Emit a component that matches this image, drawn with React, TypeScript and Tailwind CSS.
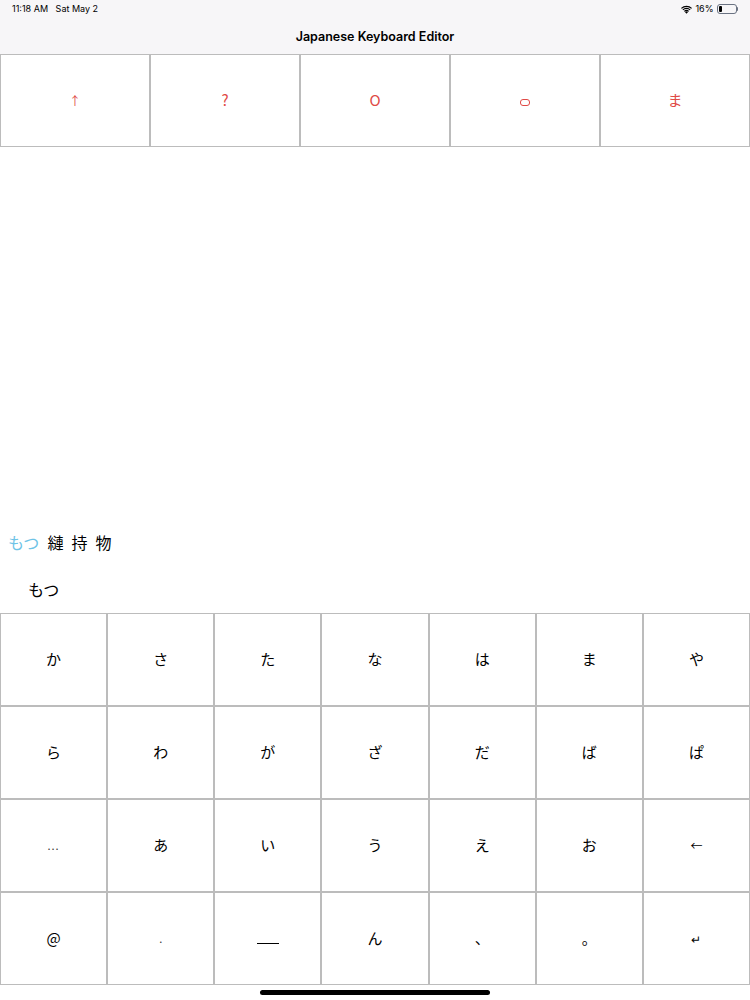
const topKeys = ['↑', '?', 'O', '○', 'ま'];

const keyRows = [
  ['か', 'さ', 'た', 'な', 'は', 'ま', 'や'],
  ['ら', 'わ', 'が', 'ざ', 'だ', 'ば', 'ぱ'],
  ['...', 'あ', 'い', 'う', 'え', 'お', '←'],
  ['@', '.', '__', 'ん', '、', '。', '↵'],
];

const jp = { fontFamily: '"Noto Sans CJK JP", "Noto Sans", sans-serif' };

function Wifi() {
  return (
    <svg className="w-[11px] h-[9px]" viewBox="0 0 12 9" fill="black">
      <path d="M6 9 L4.3 7.2 A2.4 2.4 0 0 1 7.7 7.2 Z" />
      <path d="M3.2 6.1 A4 4 0 0 1 8.8 6.1 L7.9 7 A2.7 2.7 0 0 0 4.1 7 Z" />
      <path d="M1.6 4.5 A6.3 6.3 0 0 1 10.4 4.5 L9.5 5.4 A5 5 0 0 0 2.5 5.4 Z" />
      <path d="M0 2.9 A8.6 8.6 0 0 1 12 2.9 L11.1 3.8 A7.3 7.3 0 0 0 0.9 3.8 Z" />
    </svg>
  );
}

function Battery() {
  return (
    <div className="flex items-center">
      <div className="w-[20px] h-[10px] rounded-[3px] border border-gray-500 p-[1px] flex">
        <div className="w-[3px] h-full bg-black rounded-[1px]" />
      </div>
      <div className="w-[1.5px] h-[4px] bg-gray-500 rounded-r-sm" />
    </div>
  );
}

export default function App() {
  return (
    <div
      className="w-[750px] h-[1000px] bg-white flex flex-col overflow-hidden"
      style={{ fontFamily: 'Inter, "Noto Sans", sans-serif' }}
    >
      <div className="bg-[#f7f6f8] h-[54px] flex flex-col">
        <div className="h-[18px] flex items-center justify-between px-[12px] text-[9px] text-black">
          <span>11:18 AM&nbsp;&nbsp;&nbsp;Sat May 2</span>
          <div className="flex items-center gap-[3px]">
            <Wifi />
            <span>16%</span>
            <Battery />
          </div>
        </div>
        <div className="flex-1 flex items-center justify-center text-[12.5px] font-semibold text-black pt-[3px]">
          Japanese Keyboard Editor
        </div>
      </div>

      <div className="grid grid-cols-5 h-[93px]" style={jp}>
        {topKeys.map((k, i) => (
          <div
            key={i}
            className="border border-[#bcbcbc] flex items-center justify-center text-[#e04a46] text-[15px]"
          >
            {k === '○' ? (
              <div className="w-[10px] h-[7px] border-[1.5px] border-[#e04a46] rounded-[3px] mt-[4px]" />
            ) : k === '↑' ? (
              <span className="text-[12px]">↑</span>
            ) : (
              k
            )}
          </div>
        ))}
      </div>

      <div className="flex-1" />

      <div className="flex items-center gap-[8px] pl-[8px] text-[16px] h-[26px] text-black" style={jp}>
        <span className="text-[#6ec3e6]">もつ</span>
        <span>縺</span>
        <span>持</span>
        <span>物</span>
      </div>
      <div className="h-[22px]" />
      <div className="pl-[28px] text-[16px] text-black h-[24px] flex items-center" style={jp}>
        もつ
      </div>
      <div className="h-[12px]" />

      <div className="grid grid-cols-7 grid-rows-4 h-[372px]" style={jp}>
        {keyRows.flat().map((k, i) => (
          <div
            key={i}
            className="border-[0.75px] border-[#bcbcbc] flex items-center justify-center text-[15px] text-black"
          >
            {k === '...' ? (
              <span className="text-[11px] tracking-[1px] text-[#333]">...</span>
            ) : k === '.' ? (
              <span className="text-[11px] text-[#333]">.</span>
            ) : k === '__' ? (
              <div className="w-[22px] h-[1.5px] bg-black mt-[10px]" />
            ) : k === '←' || k === '↵' ? (
              <span className="text-[12px]">{k}</span>
            ) : (
              k
            )}
          </div>
        ))}
      </div>

      <div className="h-[15px] flex items-center justify-center">
        <div className="w-[230px] h-[5px] rounded-full bg-black" />
      </div>
    </div>
  );
}
